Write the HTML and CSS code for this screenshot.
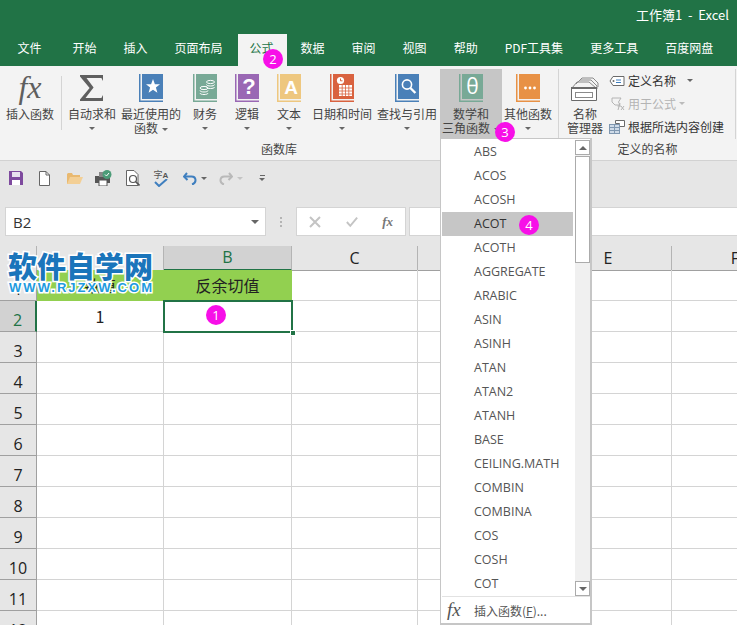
FILE: index.html
```html
<!DOCTYPE html>
<html lang="zh-CN">

<head>
    <meta charset="utf-8">
    <meta name="viewport" content="width=device-width, initial-scale=1.0">
    <title>工作簿1 - Excel</title>
    <link rel="stylesheet" href="styles.css">
</head>

<body>

    <svg class="sprite" width="0" height="0">
        <symbol id="book" viewBox="0 0 24 28">
            <rect x="0" y="0" width="1.5" height="28" fill="currentColor"></rect>
            <rect x="3" y="0" width="21" height="25" fill="currentColor"></rect>
            <rect x="0" y="26.5" width="24" height="1.5" fill="currentColor"></rect>
        </symbol>
    </svg>

    <header class="titlebar">工作簿1&nbsp; - &nbsp;Excel</header>

    <nav class="tabs">
        <span class="tab tab-file">文件</span>
        <span class="tab">开始</span>
        <span class="tab">插入</span>
        <span class="tab">页面布局</span>
        <span class="tab active">公式</span>
        <span class="tab">数据</span>
        <span class="tab">审阅</span>
        <span class="tab">视图</span>
        <span class="tab">帮助</span>
        <span class="tab">PDF工具集</span>
        <span class="tab">更多工具</span>
        <span class="tab">百度网盘</span>
    </nav>

    <section class="ribbon">
        <div class="group group-lib">
            <div class="group-btns">
                <div class="rbtn w-insert">
                    <span class="fx-big">fx</span>
                    <span class="label">插入函数</span>
                </div>
                <div class="rbtn w-sum">
                    <svg class="ico" viewBox="0 0 24 28"><path fill="#5f5f5f" d="M0 1H23V7L21.4 4H6.5L13.6 13.5L5.5 24H21.4L23 21V27H0V25.4L9.6 14L0 2.6Z"></path></svg>
                    <span class="label">自动求和</span>
                    <i class="caret"></i>
                </div>
                <div class="rbtn w-recent">
                    <svg class="ico book-blue" viewBox="0 0 24 28">
                        <use href="#book"></use>
                        <polygon fill="#fff" points="14,5 15.9,10.2 21,10.2 16.9,13.5 18.4,18.8 14,15.7 9.6,18.8 11.1,13.5 7,10.2 12.1,10.2"></polygon>
                    </svg>
                    <span class="label">最近使用的</span>
                    <span class="label">函数<i class="caret inline"></i></span>
                </div>
                <div class="rbtn w-fin">
                    <svg class="ico book-green" viewBox="0 0 24 28">
                        <use href="#book"></use>
                        <g fill="none" stroke="#fff" stroke-width="1">
                            <ellipse cx="17.5" cy="8" rx="4" ry="1.6"></ellipse>
                            <path d="M13.5 10.5c0 2 8 2 8 0M13.5 13c0 2 8 2 8 0"></path>
                            <ellipse cx="11" cy="14" rx="4" ry="1.6"></ellipse>
                            <path d="M7 16.5c0 2 8 2 8 0M7 19c0 2 8 2 8 0"></path>
                        </g>
                    </svg>
                    <span class="label">财务</span>
                    <i class="caret"></i>
                </div>
                <div class="rbtn w-logic">
                    <svg class="ico book-purple" viewBox="0 0 24 28">
                        <use href="#book"></use>
                        <text class="ico-letter" x="14" y="20" font-size="22">?</text>
                    </svg>
                    <span class="label">逻辑</span>
                    <i class="caret"></i>
                </div>
                <div class="rbtn w-text">
                    <svg class="ico book-yellow" viewBox="0 0 24 28">
                        <use href="#book"></use>
                        <text class="ico-letter" x="14" y="20" font-size="19">A</text>
                    </svg>
                    <span class="label">文本</span>
                    <i class="caret"></i>
                </div>
                <div class="rbtn w-date">
                    <svg class="ico book-red" viewBox="0 0 24 28">
                        <use href="#book"></use>
                        <circle cx="10.5" cy="6.5" r="3.6" fill="#fff"></circle>
                        <path d="M10.5 4.5v2.3h2" fill="none" stroke="#d9623f" stroke-width="1"></path>
                        <path fill="#fff" d="M9 11H22V22H9Z"></path>
                        <path d="M9 14h13M9 17h13M9 20h13M12.2 11v11M15.5 11v11M18.8 11v11" stroke="#d9623f" stroke-width=".8"></path>
                    </svg>
                    <span class="label">日期和时间</span>
                    <i class="caret"></i>
                </div>
                <div class="rbtn w-find">
                    <svg class="ico book-blue" viewBox="0 0 24 28">
                        <use href="#book"></use>
                        <circle cx="12" cy="10.5" r="4.6" fill="none" stroke="#fff" stroke-width="1.6"></circle>
                        <path d="M15.4 14l5 5" stroke="#fff" stroke-width="2.4"></path>
                    </svg>
                    <span class="label">查找与引用</span>
                    <i class="caret"></i>
                </div>
                <div class="rbtn w-math selected">
                    <svg class="ico book-green" viewBox="0 0 24 28">
                        <use href="#book"></use>
                        <text class="ico-letter thin" x="13.5" y="20" font-size="21">θ</text>
                    </svg>
                    <span class="label">数学和</span>
                    <span class="label">三角函数<i class="caret inline"></i></span>
                </div>
                <div class="rbtn w-other">
                    <svg class="ico book-orange" viewBox="0 0 24 28">
                        <use href="#book"></use>
                        <circle cx="9.5" cy="14" r="1.4" fill="#fff"></circle>
                        <circle cx="14" cy="14" r="1.4" fill="#fff"></circle>
                        <circle cx="18.5" cy="14" r="1.4" fill="#fff"></circle>
                    </svg>
                    <span class="label">其他函数</span>
                    <i class="caret"></i>
                </div>
            </div>
            <div class="group-title">函数库</div>
        </div>

        <div class="group group-names">
            <div class="group-btns">
                <div class="rbtn w-names">
                    <svg class="ico-names" viewBox="0 0 30 24">
                        <g fill="none" stroke="#8a8a8a" stroke-width="1">
                            <path d="M9 4L12 1H23L28 6V10"></path>
                            <path d="M6 7L10 3H21L27 9V12"></path>
                            <path d="M2 11L7 5H19L26 11"></path>
                        </g>
                        <path d="M1.5 10.5H26.5V23.5H1.5Z" fill="#fff" stroke="#6a6a6a"></path>
                        <rect x="1" y="10" width="26" height="2" fill="#6a6a6a"></rect>
                        <rect x="5.5" y="15.5" width="17" height="5" fill="#fff" stroke="#8a8a8a"></rect>
                    </svg>
                    <span class="label">名称</span>
                    <span class="label">管理器</span>
                </div>
                <div class="names-list">
                    <div class="nrow">
                        <svg class="nico" viewBox="0 0 16 14">
                            <path d="M4 2.5H15V11.5H4L1 7Z" fill="#fff" stroke="#6a6a6a"></path>
                            <path d="M7 6h5M7 8.5h5" stroke="#3f7fbf" stroke-width="1"></path>
                            <circle cx="4.5" cy="7" r="1" fill="#6a6a6a"></circle>
                        </svg>
                        <span>定义名称</span><i class="caret side"></i>
                    </div>
                    <div class="nrow off">
                        <svg class="nico" viewBox="0 0 16 14">
                            <path d="M3 1H12L9.5 5L11 8H6L3 5Z" fill="none" stroke="#b4b4b4"></path>
                            <path d="M9 13L11 6M8.5 9H12M12 9l3 4M15 9l-3 4" fill="none" stroke="#b4b4b4"></path>
                        </svg>
                        <span>用于公式</span><i class="caret side-off"></i>
                    </div>
                    <div class="nrow">
                        <svg class="nico" viewBox="0 0 16 14">
                            <path d="M6.5 .5H15.5V6.5H10.5V3.5H6.5Z" fill="#fff" stroke="#6a6a6a"></path>
                            <rect x=".5" y="4.5" width="10" height="9" fill="#cfdbe8" stroke="#7f97b0"></rect>
                            <path d="M.5 7.5h10M.5 10.5h10M5.5 4.5v9" stroke="#7f97b0"></path>
                        </svg>
                        <span>根据所选内容创建</span>
                    </div>
                </div>
            </div>
            <div class="group-title">定义的名称</div>
        </div>
    </section>

    <section class="qat">
        <svg class="q q-save" viewBox="0 0 14 14">
            <path fill="#7e4a9e" d="M0 0H12L14 2V14H0Z"></path>
            <rect x="3" y="1" width="8" height="5" fill="#e8e0ee"></rect>
            <rect x="3" y="9" width="8" height="5" fill="#fff"></rect>
        </svg>
        <svg class="q q-new" viewBox="0 0 11 15">
            <path d="M.5.5H7L10.5 4V14.5H.5Z" fill="#fff" stroke="#666"></path>
            <path d="M7 .5V4H10.5" fill="none" stroke="#666"></path>
        </svg>
        <svg class="q q-open" viewBox="0 0 16 13">
            <path d="M0 2V12H13V3H6L5 1H1Z" fill="#e9b970"></path>
            <path d="M0 12L3 5H16L13 12Z" fill="#f3cf95"></path>
        </svg>
        <svg class="q q-print" viewBox="0 0 17 16">
            <rect x="0" y="6" width="15" height="7" fill="#555"></rect>
            <rect x="4" y="10" width="8" height="6" fill="#fff" stroke="#555"></rect>
            <rect x="4" y="2" width="7" height="5" fill="#888"></rect>
            <circle cx="12" cy="4.5" r="4.5" fill="#4c9c78"></circle>
            <path d="M10 4.5l1.5 1.5 2.5-3" stroke="#fff" fill="none"></path>
        </svg>
        <svg class="q q-prev" viewBox="0 0 14 16">
            <path d="M.5.5H8L12 4.5V15.5H.5Z" fill="#fff" stroke="#666"></path>
            <circle cx="7" cy="9" r="3.5" fill="#fff" stroke="#555" stroke-width="1.2"></circle>
            <path d="M9.5 11.5L13.5 15.5" stroke="#555" stroke-width="1.6"></path>
        </svg>
        <span class="q-spell">
            <span class="q-spell-txt">字<b>A</b></span>
            <svg class="q-check" viewBox="0 0 14 8"><path d="M1 3l4 4L13 0" fill="none" stroke="#3f7fbf" stroke-width="2"></path></svg>
        </span>
        <svg class="q q-undo" viewBox="0 0 14 13">
            <path d="M4 1L1 4.5L4.5 8" fill="none" stroke="#3f7fbf" stroke-width="2"></path>
            <path d="M1.5 4.5H8.5C13.5 4.5 14 11 9 12.5" fill="none" stroke="#3f7fbf" stroke-width="2"></path>
        </svg>
        <i class="caret q-caret"></i>
        <svg class="q q-redo" viewBox="0 0 14 13">
            <path d="M10 1L13 4.5L9.5 8" fill="none" stroke="#b9b9b9" stroke-width="2"></path>
            <path d="M12.5 4.5H5.5C.5 4.5 0 11 5 12.5" fill="none" stroke="#b9b9b9" stroke-width="2"></path>
        </svg>
        <i class="caret q-caret off"></i>
        <span class="q-custom"><i></i><i class="caret"></i></span>
    </section>

    <section class="fbar">
        <div class="namebox">
            <span>B2</span>
            <i class="caret big"></i>
        </div>
        <span class="fbar-dots"></span>
        <div class="fbtns">
            <svg class="fbtn" viewBox="0 0 12 12"><path d="M1 1L11 11M11 1L1 11" stroke="#c4c4c4" stroke-width="2"></path></svg>
            <svg class="fbtn" viewBox="0 0 14 12"><path d="M1 6L5 10.5L13 1" fill="none" stroke="#c4c4c4" stroke-width="2.2"></path></svg>
            <span class="fx-small">fx</span>
        </div>
        <div class="finput"></div>
    </section>

    <main class="sheet">
        <div class="row head">
            <div class="hd corner"></div>
            <div class="hd"></div>
            <div class="hd on">B</div>
            <div class="hd">C</div>
            <div class="hd">D</div>
            <div class="hd">E</div>
            <div class="hd">F</div>
        </div>
        <div class="row">
            <div class="rh">1</div>
            <div class="cell fill">数值</div>
            <div class="cell fill">反余切值</div>
            <div class="cell"></div><div class="cell"></div><div class="cell"></div><div class="cell"></div>
        </div>
        <div class="row">
            <div class="rh on">2</div>
            <div class="cell">1</div>
            <div class="cell pick"><i class="handle"></i></div>
            <div class="cell"></div><div class="cell"></div><div class="cell"></div><div class="cell"></div>
        </div>
        <div class="row"><div class="rh">3</div><div class="cell"></div><div class="cell"></div><div class="cell"></div><div class="cell"></div><div class="cell"></div><div class="cell"></div></div>
        <div class="row"><div class="rh">4</div><div class="cell"></div><div class="cell"></div><div class="cell"></div><div class="cell"></div><div class="cell"></div><div class="cell"></div></div>
        <div class="row"><div class="rh">5</div><div class="cell"></div><div class="cell"></div><div class="cell"></div><div class="cell"></div><div class="cell"></div><div class="cell"></div></div>
        <div class="row"><div class="rh">6</div><div class="cell"></div><div class="cell"></div><div class="cell"></div><div class="cell"></div><div class="cell"></div><div class="cell"></div></div>
        <div class="row"><div class="rh">7</div><div class="cell"></div><div class="cell"></div><div class="cell"></div><div class="cell"></div><div class="cell"></div><div class="cell"></div></div>
        <div class="row"><div class="rh">8</div><div class="cell"></div><div class="cell"></div><div class="cell"></div><div class="cell"></div><div class="cell"></div><div class="cell"></div></div>
        <div class="row"><div class="rh">9</div><div class="cell"></div><div class="cell"></div><div class="cell"></div><div class="cell"></div><div class="cell"></div><div class="cell"></div></div>
        <div class="row"><div class="rh">10</div><div class="cell"></div><div class="cell"></div><div class="cell"></div><div class="cell"></div><div class="cell"></div><div class="cell"></div></div>
        <div class="row"><div class="rh">11</div><div class="cell"></div><div class="cell"></div><div class="cell"></div><div class="cell"></div><div class="cell"></div><div class="cell"></div></div>
        <div class="row"><div class="rh">12</div><div class="cell"></div><div class="cell"></div><div class="cell"></div><div class="cell"></div><div class="cell"></div><div class="cell"></div></div>
    </main>

    <div class="watermark">
        <div class="wm-cn">软件自学网</div>
        <div class="wm-en">WWW.RJZXW.COM</div>
    </div>

    <aside class="menu">
        <div class="menu-body">
            <ul class="menu-list">
                <li>ABS</li>
                <li>ACOS</li>
                <li>ACOSH</li>
                <li class="hover">ACOT</li>
                <li>ACOTH</li>
                <li>AGGREGATE</li>
                <li>ARABIC</li>
                <li>ASIN</li>
                <li>ASINH</li>
                <li>ATAN</li>
                <li>ATAN2</li>
                <li>ATANH</li>
                <li>BASE</li>
                <li>CEILING.MATH</li>
                <li>COMBIN</li>
                <li>COMBINA</li>
                <li>COS</li>
                <li>COSH</li>
                <li>COT</li>
            </ul>
            <div class="scroll">
                <div class="sbtn"><i class="tri up"></i></div>
                <div class="thumb"></div>
                <div class="track"></div>
                <div class="sbtn"><i class="tri"></i></div>
            </div>
        </div>
        <div class="menu-foot">
            <span class="fx-menu">fx</span>
            <span>插入函数(<u>F</u>)...</span>
        </div>
    </aside>

    <span class="badge b1">1</span>
    <span class="badge b2">2</span>
    <span class="badge b3">3</span>
    <span class="badge b4">4</span>

</body></html>
```

FILE: styles.css
```css
* {
    box-sizing: border-box;
}

html {
    overflow: hidden;
}

body {
    margin: 0;
    width: 737px;
    height: 625px;
    overflow: hidden;
    position: relative;
    background: #fff;
    color: #444;
    font-family: "Noto Sans CJK SC", "Open Sans", sans-serif;
    font-size: 12px;
}

.sprite {
    position: absolute;
}

.titlebar {
    height: 34px;
    background: #217346;
    color: #fff;
    font-size: 13px;
    line-height: 30px;
    text-align: right;
    padding-right: 8px;
}

.tabs {
    display: flex;
    height: 32px;
    background: #217346;
    padding-left: 4px;
    color: #fff;
}

.tab {
    padding: 0 13.5px;
    line-height: 28px;
    white-space: nowrap;
}

.tab-file {
    margin-right: 4px;
}

.tab.active {
    background: #f3f3f3;
    color: #217346;
    padding: 0 13px 0 12px;
    margin: 0 .5px 0 1.5px;
}

.ribbon {
    display: flex;
    height: 95px;
    background: #f3f3f3;
    border-bottom: 1px solid #d2d2d2;
}

.group {
    display: flex;
    flex-direction: column;
}

.group-lib {
    width: 559px;
    border-right: 1px solid #d4d4d4;
    height: 70px;
    margin-top: 3px;
}

.group-names {
    width: 176px;
    border-right: 1px solid #d4d4d4;
    height: 70px;
    margin-top: 3px;
    margin-left: 1px;
}

.group-btns {
    display: flex;
    height: 70px;
    flex: none;
}

.group-title {
    height: 18px;
    margin-top: 1px;
    line-height: 18px;
    text-align: center;
    flex: none;
    color: #444;
}

.rbtn {
    display: flex;
    flex-direction: column;
    align-items: center;
    padding-top: 5px;
    height: 69px;
    line-height: 14px;
    white-space: nowrap;
}

.rbtn .ico {
    width: 24px;
    height: 28px;
    margin-bottom: 5px;
    flex: none;
}

.label {
    display: block;
}

/* thin line after the insert button */
.w-insert {
    width: 62px;
    padding-right: 2px;
    position: relative;
}

.w-insert::after {
    content: "";
    position: absolute;
    right: 0;
    top: 7px;
    width: 1px;
    height: 54px;
    background: #d4d4d4;
}

.w-sum { width: 60px; }
.w-recent { width: 58px; }
.w-fin { width: 50px; }
.w-logic { width: 34px; }
.w-text { width: 50px; }
.w-date { width: 56px; }
.w-find { width: 70px; padding-left: 4px; }
.w-math { width: 62px; }
.w-other { width: 52px; }
.w-names { width: 46px; margin-left: 2px; }

.selected {
    background: #c6c6c6;
}

.book-blue { color: #4a80b8; }
.book-green { color: #78a996; }
.book-purple { color: #9a68b4; }
.book-yellow { color: #eec77f; }
.book-red { color: #d9623f; }
.book-orange { color: #e89145; }

.ico-letter {
    fill: #fff;
    font-family: "Liberation Sans", sans-serif;
    font-weight: bold;
    text-anchor: middle;
}

.ico-letter.thin {
    font-family: "Open Sans", sans-serif;
    font-weight: normal;
}

.fx-big {
    font-family: "Liberation Serif", serif;
    font-style: italic;
    font-size: 32px;
    line-height: 26px;
    height: 28px;
    margin-bottom: 5px;
    color: #5f5f5f;
}

.caret {
    display: block;
    width: 0;
    height: 0;
    border-left: 3px solid transparent;
    border-right: 3px solid transparent;
    border-top: 3px solid #666;
    margin-top: 6px;
}

.caret.inline {
    display: inline-block;
    margin: 0 0 2px 4px;
}

.caret.side {
    margin: 0 0 0 11px;
}

.caret.side-off {
    margin: 0 0 0 3px;
    border-top-color: #bbb;
}

.ico-names {
    width: 30px;
    height: 24px;
    margin-top: 3px;
    margin-bottom: 6px;
    flex: none;
}

.names-list {
    display: flex;
    flex-direction: column;
}

.nrow {
    display: flex;
    align-items: center;
    height: 23px;
    margin-left: 1px;
    white-space: nowrap;
    color: #333;
}

.nrow.off {
    color: #b4b4b4;
}

.nico {
    width: 16px;
    height: 14px;
    margin-right: 3px;
    flex: none;
}

.qat {
    display: flex;
    align-items: center;
    height: 36px;
    padding-left: 9px;
    padding-bottom: 2px;
    background: #e6e6e6;
}

.q {
    flex: none;
    display: block;
}

.q-save { width: 14px; height: 14px; }
.q-new { width: 11px; height: 15px; margin-left: 16px; }
.q-open { width: 16px; height: 13px; margin-left: 17px; }
.q-print { width: 17px; height: 16px; margin-left: 12px; }
.q-prev { width: 14px; height: 16px; margin-left: 14px; }

.q-spell {
    display: flex;
    flex-direction: column;
    align-items: center;
    width: 16px;
    margin-left: 13px;
    line-height: 9px;
    color: #555;
}

.q-spell-txt {
    font-size: 9px;
    white-space: nowrap;
}

.q-spell-txt b {
    font-size: 8px;
    font-family: "Liberation Sans", sans-serif;
}

.q-check {
    width: 14px;
    height: 8px;
    margin-top: -1px;
    display: block;
}

.q-undo { width: 14px; height: 13px; margin-left: 14px; }
.q-redo { width: 14px; height: 13px; margin-left: 12px; }

.q-caret {
    margin: 0 0 0 4px;
}

.q-caret.off {
    border-top-color: #c4c4c4;
}

.q-custom {
    display: flex;
    flex-direction: column;
    align-items: center;
    margin-left: 16px;
    gap: 2px;
}

.q-custom i:first-child {
    width: 5px;
    height: 1px;
    background: #666;
}

.q-custom .caret {
    margin: 0;
}

.fbar {
    display: flex;
    align-items: center;
    height: 49px;
    padding: 10px 0 10px 5px;
    background: #e6e6e6;
}

.namebox {
    display: flex;
    align-items: center;
    justify-content: space-between;
    width: 261px;
    height: 29px;
    padding: 0 6px 0 7px;
    background: #fff;
    border: 1px solid #d4d4d4;
    font-family: "Open Sans", sans-serif;
    font-size: 15px;
    color: #333;
}

.caret.big {
    margin: 0;
    border-left-width: 4px;
    border-right-width: 4px;
    border-top-width: 4px;
}

.fbar-dots {
    width: 2px;
    height: 10px;
    margin: 0 14px;
    background: repeating-linear-gradient(#b4b4b4 0 2px, transparent 2px 4px);
}

.fbtns {
    display: flex;
    align-items: center;
    justify-content: space-between;
    width: 110px;
    height: 29px;
    padding: 0 12px;
    background: #fff;
    border: 1px solid #d4d4d4;
}

.fbtn {
    width: 12px;
    height: 12px;
}

.fx-small {
    font-family: "Liberation Serif", serif;
    font-style: italic;
    font-weight: bold;
    font-size: 13px;
    color: #777;
}

.finput {
    flex: 1;
    height: 29px;
    margin-left: 3px;
    background: #fff;
    border: 1px solid #d4d4d4;
    border-right: 0;
}

.sheet {
    font-family: "Open Sans", sans-serif;
    color: #222;
    overflow: hidden;
    height: 379px;
}

.row {
    display: grid;
    grid-template-columns: 37px 127px 128px 126px 127px 127px 127px;
    height: 31px;
}

.row.head {
    height: 24px;
}

.hd {
    display: flex;
    align-items: center;
    justify-content: center;
    padding-bottom: 1px;
    background: #e6e6e6;
    border-right: 1px solid #b4b4b4;
    border-bottom: 1px solid #a0a0a0;
    font-size: 16px;
    color: #222;
}

.hd.on {
    background: #d2d2d2;
    color: #217346;
    border-bottom: 2px solid #217346;
}

.rh {
    display: flex;
    align-items: center;
    justify-content: center;
    padding-top: 7px;
    background: #e6e6e6;
    border-right: 1px solid #a0a0a0;
    border-bottom: 1px solid #a0a0a0;
    font-size: 16px;
}

.rh.on {
    background: #d2d2d2;
    color: #217346;
    border-right: 2px solid #217346;
}

.cell {
    display: flex;
    align-items: center;
    justify-content: center;
    padding-bottom: 1px;
    border-right: 1px solid #d4d4d4;
    border-bottom: 1px solid #d4d4d4;
    font-family: "Noto Sans CJK SC", sans-serif;
    font-size: 16px;
}

.cell.fill {
    background: #92d050;
    border-color: #92d050;
}

.cell.pick {
    position: relative;
    outline: 2px solid #217346;
    outline-offset: -1px;
    border: 0;
}

.handle {
    position: absolute;
    right: -4px;
    bottom: -4px;
    width: 6px;
    height: 6px;
    background: #217346;
    border: 1px solid #fff;
}

.watermark {
    position: absolute;
    left: 8px;
    top: 248px;
    width: 146px;
}

.wm-cn {
    font-weight: 900;
    font-size: 29px;
    line-height: 34px;
    white-space: nowrap;
    color: #1a75bb;
    -webkit-text-stroke: 3px #fff;
    paint-order: stroke fill;
}

.wm-en {
    font-family: "Liberation Sans", sans-serif;
    font-weight: bold;
    font-size: 13px;
    line-height: 12px;
    letter-spacing: 2.05px;
    padding-left: 1px;
    white-space: nowrap;
    color: #1e9be0;
    -webkit-text-stroke: 3px #fff;
    paint-order: stroke fill;
}

.menu {
    position: absolute;
    left: 440px;
    top: 138px;
    width: 152px;
    height: 487px;
    background: #fff;
    border: 1px solid #c6c6c6;
    border-width: 1px 2px 2px 1px;
    padding: 1px 0 0 1px;
    display: flex;
    flex-direction: column;
}

.menu-body {
    display: flex;
    height: 456px;
}

.menu-list {
    list-style: none;
    margin: 0;
    padding: 0;
    width: 131px;
    font-family: "Open Sans", sans-serif;
    font-size: 12.5px;
    color: #555;
}

.menu-list li {
    height: 24px;
    line-height: 24px;
    padding-left: 32px;
}

.menu-list li.hover {
    background: #c6c6c6;
    color: #333;
}

.scroll {
    display: flex;
    flex-direction: column;
    width: 15px;
    margin-left: 2px;
    background: #f0f0f0;
}

.sbtn {
    display: flex;
    align-items: center;
    justify-content: center;
    flex: none;
    height: 15px;
    background: #fff;
    border: 1px solid #ababab;
}

.tri {
    width: 0;
    height: 0;
    border-left: 4px solid transparent;
    border-right: 4px solid transparent;
    border-top: 4px solid #666;
}

.tri.up {
    border-top: 0;
    border-bottom: 4px solid #666;
}

.thumb {
    height: 107px;
    margin-top: 1px;
    flex: none;
    background: #fff;
    border: 1px solid #ababab;
}

.track {
    flex: 1;
}

.menu-foot {
    display: flex;
    align-items: center;
    height: 28px;
    border-top: 1px solid #e2e2e2;
    color: #555;
    font-size: 12px;
    padding-left: 5px;
}

.fx-menu {
    width: 27px;
    font-family: "Liberation Serif", serif;
    font-style: italic;
    font-size: 19px;
    line-height: 20px;
    color: #555;
}

.badge {
    position: absolute;
    width: 20px;
    height: 20px;
    border-radius: 50%;
    background: #f70fe8;
    color: #fff;
    font-family: "Open Sans", sans-serif;
    font-size: 13px;
    line-height: 20px;
    text-align: center;
}

.b1 { left: 206px; top: 305px; }
.b2 { left: 263px; top: 49px; }
.b3 { left: 495px; top: 122px; }
.b4 { left: 519px; top: 215px; }
```
